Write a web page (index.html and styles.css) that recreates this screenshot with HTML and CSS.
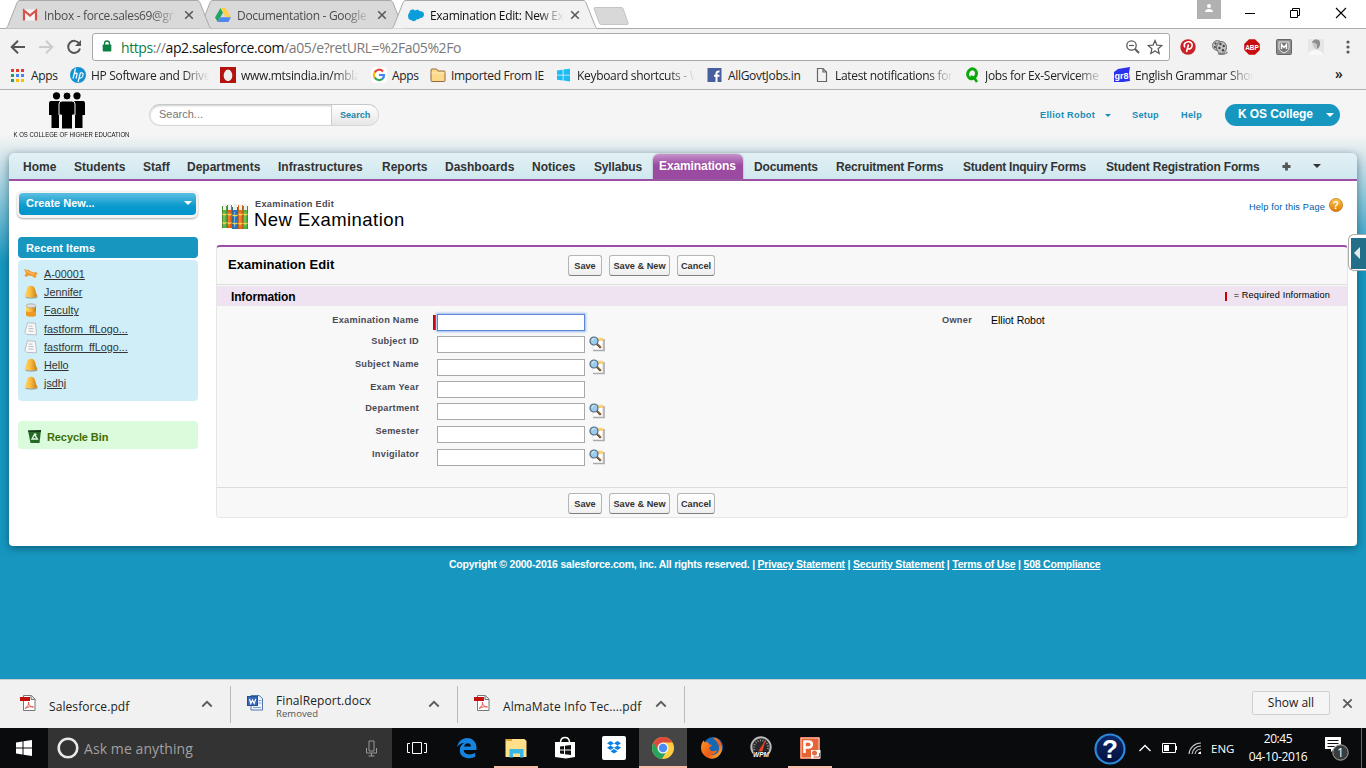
FILE: index.html
```html
<!DOCTYPE html>
<html lang="en">
<head>
<meta charset="utf-8">
<title>Examination Edit: New Examination</title>
<link rel="stylesheet" href="styles.css">
</head>
<body>
<svg class="defs" width="0" height="0" aria-hidden="true">
  <defs>
    <linearGradient id="gold" x1="0" x2="1"><stop offset="0" stop-color="#ffd46b"/><stop offset=".45" stop-color="#fbbd3e"/><stop offset="1" stop-color="#c67a12"/></linearGradient>
    <linearGradient id="ball" x1="0" y1="0" x2="0" y2="1"><stop offset="0" stop-color="#ffc14a"/><stop offset="1" stop-color="#e07c00"/></linearGradient>
    <linearGradient id="blueq" x1="0" y1="0" x2="0" y2="1"><stop offset="0" stop-color="#0c2a6b"/><stop offset="1" stop-color="#03103c"/></linearGradient>
    <linearGradient id="fox" x1="0" y1="0" x2="1" y2="1"><stop offset="0" stop-color="#ff9a1f"/><stop offset=".6" stop-color="#ee5b17"/><stop offset="1" stop-color="#ffcf3a"/></linearGradient>
  </defs>
  <symbol id="close" viewBox="0 0 10 10"><path d="M1.2 1.2l7.600 7.600M8.800 1.200L1.200 8.800" stroke="#5a5a5a" stroke-width="1.600"/></symbol>
  <symbol id="caret-up" viewBox="0 0 12 8"><path d="M1.300 6.500L6 1.800l4.700 4.700" fill="none" stroke="#5a5a5a" stroke-width="1.800"/></symbol>
  <symbol id="pdf" viewBox="0 0 16 16"><path d="M3.500.5h8l3.500 3.500v11.500H3.500z" fill="#fff" stroke="#777"/><path d="M11 .5V4.500h4" fill="#ddd" stroke="#777"/><rect y="2" width="10" height="4" fill="#c4100c"/><path d="M5 13.500c3-2 4-4.500 3.500-6.500-.5 3 2.500 5 5 5-3-.9-5.500 0-8.500 1.500z" fill="none" stroke="#e5554d"/></symbol>
  <symbol id="bell" viewBox="0 0 14 14"><ellipse cx="7.500" cy="12.300" rx="6.300" ry="1.500" fill="#7d8c8c" opacity=".7"/><path d="M.5 11C1.800 9.500 2.200 6 3.200 3.200c1.200-3.300 6.400-3.300 7.600 0C11.800 6 12.200 9.500 13.500 11c.5 2-13.500 2-13 0z" fill="url(#gold)"/></symbol>
  <symbol id="doc" viewBox="0 0 14 14"><path d="M3.500.8l8 .5 1 11.500-9.700-.4-2-1.800z" fill="#f8f8f8" stroke="#aab4b8" stroke-width=".8"/><path d="M4.500 4l4 .2M4.500 6.500l5 .2M4.500 9l5 .3" stroke="#b9bdc0"/></symbol>
  <symbol id="lookup" viewBox="0 0 16 16"><path d="M4 14.500h11V3" fill="none" stroke="#aaa" stroke-width="1.600"/><path d="M4 2h9.500v11.500H4z" fill="#fff" stroke="#ddd" stroke-width=".6"/><path d="M7 2h7v3H7z" fill="#fbd07a"/><path d="M7.500 7.500l4.300 4.300" stroke="#53381f" stroke-width="2.200"/><path d="M8.500 8l3.500 3.500" stroke="#e7a252" stroke-width=".8"/><circle cx="5" cy="5" r="4" fill="#9bccec" stroke="#526a7a" stroke-width="1.200"/><path d="M3 4.500C3.500 3 4.500 2.500 5.500 2.600" fill="none" stroke="#e8f6ff"/></symbol>
  <symbol id="tab-shape" viewBox="0 0 207 29" preserveAspectRatio="none"><path d="M.5 28.500C2 28 2.500 26.500 3 25.500L11.500 4C12.500 1.500 13 .5 15 .5H192c2 0 2.500 1 3.500 3.500l8.500 21.500c.5 1 1 2.500 2.500 3" stroke="#a9a9a9"/></symbol>
</svg>

<header class="browser">
  <div class="tabstrip">
    <div class="tab tab-first">
      <svg class="tab-bg"><use href="#tab-shape"/></svg>
      <svg class="tab-icon" viewBox="0 0 16 16"><path d="M1 2.500h14v11H1z" fill="#f5f5f5"/><path d="M2 13.500V3.500l6 5 6-5v10" fill="none" stroke="#d9524a" stroke-width="2.200"/></svg>
      <span class="tab-title">Inbox - force.sales69@gr</span>
      <svg class="tab-close"><use href="#close"/></svg>
    </div>
    <div class="tab">
      <svg class="tab-bg"><use href="#tab-shape"/></svg>
      <svg class="tab-icon" viewBox="0 0 16 16"><path d="M5.500 1L0 10.500 2.700 15 8 5.500z" fill="#21a464"/><path d="M5.500 1h5L16 10.300h-5.200z" fill="#ffcf48"/><path d="M5.500 10.300H16L13.300 15H2.700z" fill="#4f87ee"/></svg>
      <span class="tab-title">Documentation - Google</span>
      <svg class="tab-close"><use href="#close"/></svg>
    </div>
    <div class="tab tab-active">
      <svg class="tab-bg"><use href="#tab-shape"/></svg>
      <svg class="tab-icon" viewBox="0 0 16 16"><path d="M3.200 13C1 13 0 11.500.2 9.600-.2 7.500.8 6.200 1.500 5.800 1.300 3.500 3 2.400 4.700 2.500 5.700 2.500 6.500 3 7 3.600c1.800-1.500 4-.9 4.800.7 2.500-.6 4.200 1 4.200 3.200 0 2.300-1.800 3.900-4 3.600-.8 1.200-2 1.600-3.200 1.200-1.400 2.200-4.600 2.500-5.600.7z" fill="#0b9dda"/></svg>
      <span class="tab-title">Examination Edit: New Ex</span>
      <svg class="tab-close"><use href="#close"/></svg>
    </div>
    <svg class="new-tab" viewBox="0 0 36 18"><path d="M1 1.500q0-1 1-1h26q1.500 0 2 1l5 14q.5 2-1 2H9q-2 0-2.500-1z" fill="#d8d8d8" stroke="#c5c5c5"/></svg>
    <div class="window-tools">
      <svg class="profile" viewBox="0 0 24 19"><rect width="24" height="19" fill="#b1b1b1"/><circle cx="12" cy="6" r="2" fill="#fff"/><path d="M8 12c0-4 8-4 8 0z" fill="#fff"/></svg>
      <svg class="winbtn" viewBox="0 0 12 12"><path d="M1 6.500h10" stroke="#000"/></svg>
      <svg class="winbtn" viewBox="0 0 12 12"><path d="M1.500 3.500h7v7h-7zM3.500 3.500v-2h7v7h-2" fill="none" stroke="#000"/></svg>
      <svg class="winbtn" viewBox="0 0 12 12"><path d="M1 1l10 10M11 1L1 11" stroke="#000" stroke-width="1.100"/></svg>
    </div>
  </div>
  <div class="toolbar">
    <svg class="nav-btn" viewBox="0 0 16 16"><path d="M15 8H2M8 1.700L1.700 8 8 14.300" fill="none" stroke="#555" stroke-width="2"/></svg>
    <svg class="nav-btn" viewBox="0 0 16 16"><path d="M1 8h13M8 1.700L14.300 8 8 14.300" fill="none" stroke="#ccc" stroke-width="2"/></svg>
    <svg class="nav-btn" viewBox="0 0 16 16"><path d="M13.200 4.500A6 6 0 1 0 14 9.500" fill="none" stroke="#555" stroke-width="2"/><path d="M15 1v6H9z" fill="#555"/></svg>
    <div class="omnibox">
      <svg class="lock" viewBox="0 0 10 12"><path d="M2.500 5V3.500a2.500 2.500 0 0 1 5 0V5" fill="none" stroke="#0b8043" stroke-width="1.300"/><rect x=".7" y="4.500" width="8.600" height="7" rx=".7" fill="#0b8043"/></svg>
      <span class="url"><span class="scheme">https</span>://<b>ap2.salesforce.com</b>/a05/e?retURL=%2Fa05%2Fo</span>
      <svg class="omni-icon" viewBox="0 0 16 16"><circle cx="6.500" cy="6.500" r="4.700" fill="none" stroke="#5a5a5a" stroke-width="1.300"/><path d="M4 6.500h5" stroke="#5a5a5a" stroke-width="1.200"/><path d="M10 10l4 4" stroke="#5a5a5a" stroke-width="2"/></svg>
      <svg class="omni-icon" viewBox="0 0 16 16"><path d="M8 1.500l1.900 4.600 4.900.4-3.700 3.200 1.100 4.800L8 12l-4.200 2.500 1.100-4.800L1.200 6.500l4.900-.4z" fill="none" stroke="#5a5a5a" stroke-width="1.200"/></svg>
    </div>
    <div class="extensions">
      <svg viewBox="0 0 16 16"><circle cx="8" cy="8" r="7.700" fill="#cb2027"/><path d="M4.800 8.300C3 4.500 6 2.800 8.400 2.800c2.800 0 4 1.900 3.700 3.900-.4 2.700-2.600 4-4.300 2.700M8.500 5.500L6.500 13" fill="none" stroke="#fff" stroke-width="1.600"/></svg>
      <svg viewBox="0 0 16 16"><path d="M6 14.500c3 1.500 8 1 9.500-1.500" fill="none" stroke="#888" stroke-width="1.500"/><circle cx="5.500" cy="6.500" r="5" fill="#bbb" stroke="#777"/><ellipse cx="9.500" cy="8.500" rx="5" ry="6" fill="#c4c4c4" stroke="#666"/><g fill="#444"><circle cx="8.500" cy="5" r="1.200"/><circle cx="11.700" cy="7" r="1.200"/><circle cx="7.500" cy="9" r="1.200"/><circle cx="11" cy="11.200" r="1.200"/><circle cx="3.500" cy="4.500" r="1"/><circle cx="3" cy="8" r="1"/></g></svg>
      <svg viewBox="0 0 16 16"><path d="M5 .2h6L15.800 5v6L11 15.800H5L.2 11V5z" fill="#c70d0d"/><text x="8" y="10.600" class="abp">ABP</text></svg>
      <svg viewBox="0 0 16 16"><rect x=".5" y=".5" width="15" height="15" rx="1" fill="#8b8b8b" stroke="#666"/><path d="M3 3h10v6c0 2-2 3.500-5 5-3-1.500-5-3-5-5z" fill="#777" stroke="#eee"/><path d="M5.500 10V5.500L8 8.500l2.500-3V10" fill="none" stroke="#fff" stroke-width="1.400"/></svg>
      <svg viewBox="0 0 16 16"><rect width="16" height="16" fill="#e6e6e6"/><path d="M4.500 4c0-5 7.500-5 7.500 0 0 3-1 6-3.500 6s-4-3-4-6z" fill="#c7c7c7"/><path d="M4 4c0-4 7-5 8-1 .5 3-1 6-3 7V6C8 4 6 3 4 4z" fill="#8d8d8d"/><path d="M0 16c1-4 4-5 7-5s7 1 9 5z" fill="#f8f8f8"/></svg>
      <svg class="kebab" viewBox="0 0 16 16"><g fill="#5a5a5a"><circle cx="8" cy="3" r="1.600"/><circle cx="8" cy="8" r="1.600"/><circle cx="8" cy="13" r="1.600"/></g></svg>
    </div>
  </div>
  <nav class="bookmarks">
    <div class="bm"><svg viewBox="0 0 16 16"><g fill="#e33b2e"><path d="M1 2h3v3H1zM6 2h3v3H6zM11 2h3v3h-3z"/></g><g><path d="M1 7h3v3H1zM1 12h3v3H1z" fill="#1fa15a"/><path d="M6 7h3v3H6zM11 7h3v3h-3z" fill="#4285f4"/><path d="M6 12h3v3H6zM11 12h3v3h-3z" fill="#fbbc05"/></g></svg><span>Apps</span></div>
    <div class="bm fade"><svg viewBox="0 0 16 16"><circle cx="8" cy="8" r="8" fill="#1292d2"/><path d="M5.500 1.500L3 11.500M4.500 7c1.500-1.500 3-1 2.500.5l-1 4M10.500 5.500L8 15M10 6.500c2-1.500 3.500-.5 3 1.500-.5 2.500-2 3.500-4 3" fill="none" stroke="#fff" stroke-width="1.200"/></svg><span>HP Software and Drive</span></div>
    <div class="bm fade"><svg viewBox="0 0 16 16"><rect width="16" height="16" fill="#b3120f"/><path d="M8 2.500c2.200 0 4.300 3 4.300 6S10.500 14 8 14s-4.300-2.500-4.300-5.500 2.100-6 4.300-6z" fill="#eee"/></svg><span>www.mtsindia.in/mbla</span></div>
    <div class="bm"><svg viewBox="0 0 16 16"><rect width="16" height="16" rx="4" fill="#fff"/><g fill="none" stroke-width="2.200"><path d="M12 4.500A5 5 0 0 0 3.700 5.500" stroke="#ea4335"/><path d="M3.700 5.300a5 5 0 0 0 0 5.400" stroke="#fbbc05"/><path d="M3.700 10.500a5 5 0 0 0 7.800 1.200" stroke="#34a853"/><path d="M11.300 12A5 5 0 0 0 13 8H8" stroke="#4285f4"/></g></svg><span>Apps</span></div>
    <div class="bm"><svg viewBox="0 0 16 16"><path d="M1 3q0-1 1-1h4.500l1.500 2H14q1 0 1 1v8.500q0 1-1 1H2q-1 0-1-1z" fill="#ffd98a" stroke="#94693d"/><path d="M1.500 6h13" stroke="#ffedbd"/></svg><span>Imported From IE</span></div>
    <div class="bm fade"><svg viewBox="0 0 16 16"><path d="M1 3.500l5.700-.8v5H1zM7.500 2.600L14 1.700v6H7.500zM1 8.500h5.700v5L1 12.700zM7.500 8.500H14v6l-6.500-.9z" fill="#1cbcf5"/></svg><span>Keyboard shortcuts - W</span></div>
    <div class="bm"><svg viewBox="0 0 16 16"><rect x=".5" y="1" width="14" height="14" fill="#475f9f"/><path d="M9.500 15V6.500C9.500 5 10.500 4.300 12.500 4.500M7 8.800h5.500" fill="none" stroke="#fff" stroke-width="2"/></svg><span>AllGovtJobs.in</span></div>
    <div class="bm fade"><svg viewBox="0 0 16 16"><path d="M3.500 1.500H9L12.500 5v9.500h-9zM9 1.500V5h3.500" fill="none" stroke="#666" stroke-width="1.200"/></svg><span>Latest notifications for</span></div>
    <div class="bm fade"><svg viewBox="0 0 16 16"><ellipse cx="8" cy="6.800" rx="4.300" ry="5" fill="none" stroke="#0aa80a" stroke-width="3" transform="rotate(20 8 7)"/><path d="M6.500 9.500l3.500 1 3 4.500" fill="none" stroke="#0aa80a" stroke-width="2.500"/></svg><span>Jobs for Ex-Serviceme</span></div>
    <div class="bm fade"><svg viewBox="0 0 16 16"><path d="M4 2l12-2-1 6 1 8-7 1H0V5z" fill="#2c31ef"/><text x="7.500" y="11.500" class="gr8">gr8</text></svg><span>English Grammar Shor</span></div>
    <div class="more">»</div>
  </nav>
</header>

<main class="page">
  <div class="masthead">
    <div class="logo">
      <svg viewBox="0 0 38 37"><circle cx="8.500" cy="3.800" r="3.600"/><circle cx="29" cy="3.800" r="3.600"/><path d="M3 9h9v9.500h-1V36H3.500V23H1V11q0-2 2-2zM26 9h9q2 0 2 2v12h-2.500v13H27V18.500h-1z"/><g stroke="#f5f5f5" stroke-width="1"><path d="M14 9h10q3 0 3 3v11h-2.500v14h-11V23H11V12q0-3 3-3z"/><circle cx="19" cy="4" r="4"/></g></svg>
      <span>K OS COLLEGE OF HIGHER EDUCATION</span>
    </div>
    <div class="search"><span class="search-field">Search...</span><span class="search-btn">Search</span></div>
    <div class="user-links">
      <a class="u-name">Elliot Robot</a><i class="tri tri-user"></i><a class="u-setup">Setup</a><a class="u-help">Help</a>
      <div class="app-menu"><span>K OS College</span><i class="tri"></i></div>
    </div>
  </div>

  <div class="card">
    <nav class="tabs">
      <a>Home</a><a>Students</a><a>Staff</a><a>Departments</a><a>Infrastructures</a><a>Reports</a><a>Dashboards</a><a>Notices</a><a class="tight">Syllabus</a><a class="current">Examinations</a><a class="tight">Documents</a><a class="tight">Recruitment Forms</a><a class="tighter">Student Inquiry Forms</a><a class="tight">Student Registration Forms</a>
      <svg class="plus" viewBox="0 0 9 9"><path d="M4.500.5v8M.5 4.500h8" stroke="#555" stroke-width="2.800"/></svg><i class="tri tri-tabs"></i>
    </nav>
    <div class="columns">
      <aside class="sidebar">
        <div class="create"><div class="create-in"><span>Create New...</span><i class="tri"></i></div></div>
        <section class="recent">
          <h2>Recent Items</h2>
          <ul>
            <li><svg viewBox="0 0 14 14"><path d="M0 2l2.500 1L4 2.500 6 4l4 1.500 2-.5 1.800 1.500L12 8l.5 2-2 1L8 9 5 8.500 2 10 .5 8.500 2 6.500z" fill="#f09a32"/><path d="M2 4l8 3.500" stroke="#ffc476"/></svg><a>A-00001</a></li>
            <li><svg><use href="#bell"/></svg><a>Jennifer</a></li>
            <li><svg viewBox="0 0 14 14"><path d="M2 3v9c0 2 10 2 10 0V3z" fill="url(#gold)"/><path d="M2 8v4c0 2 10 2 10 0V8c0 1.500-10 1.500-10 0z" fill="#ec9924"/><ellipse cx="7" cy="2.800" rx="5" ry="2" fill="#ddd" stroke="#999" stroke-width=".6"/></svg><a>Faculty</a></li>
            <li><svg><use href="#doc"/></svg><a>fastform_ffLogo...</a></li>
            <li><svg><use href="#doc"/></svg><a>fastform_ffLogo...</a></li>
            <li><svg><use href="#bell"/></svg><a>Hello</a></li>
            <li><svg><use href="#bell"/></svg><a>jsdhj</a></li>
          </ul>
        </section>
        <div class="recycle"><svg viewBox="0 0 14 15"><path d="M.5 1.500h13L12 14H3z" fill="#256b25"/><path d="M.5 1.500L1 3h12.500V1z" fill="#133d13"/><path d="M4.500 10l2.500-4.500L9.800 10zM7 5l2 .5" fill="none" stroke="#e4f5e4" stroke-width="1.400"/></svg><span>Recycle Bin</span></div>
      </aside>
      <section class="detail">
        <div class="title-row">
          <svg class="books" viewBox="0 0 26 26"><path d="M0 2h5v22H0z" fill="#55b340"/><path d="M5 1h5v23H5z" fill="#e65d12"/><path d="M10 3h6v22h-6z" fill="#2e75c0"/><path d="M16 1h5v24h-5z" fill="#ed6b17"/><path d="M21 2h5v23h-5z" fill="#55b340"/><path d="M1 0h3v6H1zM6 0h3v6H6zM11 0h4v6h-4zM17 0h3v6h-3zM22 0h3v6h-3z" fill="#eef0ee"/><path d="M.3 2v22M5.100 2v22M10.200 3v22M15.900 3v22M20.900 2v23M25.700 2v23" stroke="#4d5a28" stroke-width=".6"/><path d="M2 8v14M23 8v14" stroke="#8ed36f"/><path d="M7 8v14M18 8v14" stroke="#ff9a50"/><path d="M12.500 8v15" stroke="#6eb1ea"/><path d="M.5 10q2 1.500 4 0M5.500 10q2 1.500 4 0M10.500 11q2.500 1.500 5 0M16.500 10q2 1.500 4 0M21.500 10q2 1.500 4 0M.5 18.500q2 1.500 4 0M5.500 18.500q2 1.500 4 0M10.500 19q2.500 1.500 5 0M16.500 19q2 1.500 4 0M21.500 19q2 1.500 4 0" fill="none" stroke="#f8d44c" stroke-width="1.300"/></svg>
          <div class="titles"><div class="kind">Examination Edit</div><h1>New Examination</h1></div>
          <div class="help-link"><a>Help for this Page</a><svg viewBox="0 0 14 14"><circle cx="7" cy="7" r="6.600" fill="url(#ball)" stroke="#b87620" stroke-width=".7"/><text x="7" y="10.700" class="help-q">?</text></svg></div>
        </div>
        <form class="panel">
          <div class="panel-head"><h2>Examination Edit</h2><div class="buttons"><span class="btn b-save">Save</span><span class="btn b-new">Save &amp; New</span><span class="btn b-cancel">Cancel</span></div></div>
          <div class="section-head"><h3>Information</h3><span class="required"><i></i><span>= Required Information</span></span></div>
          <div class="fields">
            <div class="left">
              <div class="row h22"><label class="low">Examination Name</label><span class="req"></span><span class="input focus"></span></div>
              <div class="row"><label>Subject ID</label><span class="input"></span><svg><use href="#lookup"/></svg></div>
              <div class="row h22"><label>Subject Name</label><span class="input"></span><svg><use href="#lookup"/></svg></div>
              <div class="row h22"><label class="low">Exam Year</label><span class="input"></span></div>
              <div class="row"><label>Department</label><span class="input"></span><svg><use href="#lookup"/></svg></div>
              <div class="row"><label>Semester</label><span class="input"></span><svg><use href="#lookup"/></svg></div>
              <div class="row"><label>Invigilator</label><span class="input"></span><svg><use href="#lookup"/></svg></div>
            </div>
            <div class="owner"><label>Owner</label><span>Elliot Robot</span></div>
          </div>
          <div class="panel-foot"><div class="buttons"><span class="btn b-save">Save</span><span class="btn b-new">Save &amp; New</span><span class="btn b-cancel">Cancel</span></div></div>
        </form>
      </section>
    </div>
  </div>
  <footer class="copyright">Copyright © 2000-2016 salesforce.com, inc. All rights reserved. | <u>Privacy Statement</u> | <u>Security Statement</u> | <u>Terms of Use</u> | <u>508 Compliance</u></footer>
  <div class="drawer"><svg viewBox="0 0 15 31"><rect width="15" height="31" fill="#236e89"/><path d="M9 9v12l-6-6z" fill="#e5e9ea"/></svg></div>
</main>

<div class="downloads">
  <div class="dl dl-1"><svg class="dl-icon"><use href="#pdf"/></svg><span class="dl-name">Salesforce.pdf</span><svg class="caret"><use href="#caret-up"/></svg></div>
  <div class="dl dl-2"><svg class="dl-icon" viewBox="0 0 16 16"><path d="M4 .5h8l3.500 3v11.500H4z" fill="#f0f5ff" stroke="#5576ad"/><path d="M11.500 5.500h3M11.500 8h3M6 12.500h8" stroke="#7f9bd0"/><rect x=".5" y="1.500" width="10" height="9" fill="#3768b9" stroke="#244e96"/><path d="M2.500 4l1.300 4.500L5.500 5l1.700 3.500L8.700 4" fill="none" stroke="#fff" stroke-width="1.200"/></svg><span class="dl-name n2">FinalReport.docx<small>Removed</small></span><svg class="caret"><use href="#caret-up"/></svg></div>
  <div class="dl dl-3"><svg class="dl-icon"><use href="#pdf"/></svg><span class="dl-name n3">AlmaMate Info Tec....pdf</span><svg class="caret"><use href="#caret-up"/></svg></div>
  <div class="show-all">Show all</div>
  <svg class="dl-close"><use href="#close"/></svg>
</div>

<div class="taskbar">
  <div class="start"><svg viewBox="0 0 16 16"><path d="M0 2.500l6.500-1v6H0zM7.500 1.300L16 0v7.500H7.500zM0 8.500h6.500v6L0 13.500zM7.500 8.500H16V16l-8.500-1.300z" fill="#fff"/></svg></div>
  <div class="cortana">
    <svg class="ring" viewBox="0 0 22 22"><circle cx="11" cy="11" r="9.300" fill="none" stroke="#e8e8e8" stroke-width="2.600"/></svg>
    <span>Ask me anything</span>
    <svg class="mic" viewBox="0 0 12 17"><path d="M3.500 1h5v10h-5zM1 8v5h10V8M6 13v3M3 16h6" fill="none" stroke="#999"/></svg>
  </div>
  <div class="apps">
    <div class="app"><svg viewBox="0 0 24 24"><path d="M7.500 6.500h9v11h-9zM5 7.500H2.500v9H5M19 7.500h2.500v9H19" fill="none" stroke="#fff"/></svg></div>
    <div class="app"><svg viewBox="0 0 24 24"><path d="M2.200 11C3 5.500 7 2 12.200 2 18 2 21.500 6.500 21.500 12v2H8.700c.2 5 7.300 5.500 11.500 2.800v4C14 24 4.500 22 4.800 14c0-3.500 2-6 4.600-7C6 7 3.500 8.800 2.200 11zM9 10.500h7c0-4.500-6-4.500-7 0z" fill="#1584df"/></svg></div>
    <div class="app run"><svg viewBox="0 0 24 24"><path d="M1.500 3h19l2 2v16h-21z" fill="#ffe08a"/><path d="M2 3h6v2H2z" fill="#dba638"/><path d="M5.500 13h14v8.500h-3.500v-4h-7v4H5.500z" fill="#39b6e8"/></svg></div>
    <div class="app"><svg viewBox="0 0 24 24"><path d="M7.500 6C8 0 16 0 16.500 6" fill="none" stroke="#fff" stroke-width="1.500"/><path d="M2 6h20v15l-9 1.500L2 21z" fill="#fff"/><path d="M7 10.500l4-.5v3.500H7zM12 9.800l6-.8v4.500h-6zM7 14.500h4V18l-4-.5zM12 14.500h6V19l-6-.8z" fill="#111"/></svg></div>
    <div class="app"><svg viewBox="0 0 24 24"><rect width="24" height="24" rx="2" fill="#fff"/><path d="M8.500 5L5 7.300l3.500 2.200L12 7.300zM15.500 5L12 7.300l3.500 2.200L19 7.300zM8.500 9.500L5 11.800 8.500 14l3.500-2.200zM15.500 9.500L12 11.800l3.500 2.200 3.500-2.200zM12 13l-3.500 2.200L12 17.500l3.500-2.300z" fill="#0b7fe8"/></svg></div>
    <div class="app run on"><svg viewBox="0 0 24 24"><circle cx="12" cy="12" r="11" fill="#ffcd42"/><path d="M2.500 6.500A11 11 0 0 0 11 23l5-8.500z" fill="#27a55f"/><path d="M12 6.500h9.500a11 11 0 0 0-19 0L7 14z" fill="#dc4a3c"/><circle cx="12" cy="12" r="5.500" fill="#f5f5f5"/><circle cx="12" cy="12" r="4.200" fill="#4b8bf4"/></svg></div>
    <div class="app"><svg viewBox="0 0 24 24"><circle cx="13" cy="11" r="10" fill="#1767b5"/><path d="M13 2c4-1 9 3 9 10 0 6-4.500 10.700-10 10.700S1 18 1 12C1 9 2 6 3.500 4.500L5 6.500 8 6c0 2 2 3 4 3-1 2-3 2-3 3 1 4 5 4 8 2-1 5-7 5-9 3 5 4 12 1 11-6-.5-4-3-7-6-9z" fill="url(#fox)"/></svg></div>
    <div class="app"><svg viewBox="0 0 24 24"><circle cx="12" cy="11" r="9.700" fill="#292929" stroke="#bbb" stroke-width="2"/><path d="M5.500 14a7 7 0 1 1 13 0" fill="none" stroke="#8c8c8c" stroke-width="2" stroke-dasharray="1 1.500"/><path d="M17 3L9 16l3.500 2z" fill="#ef4525"/><rect x="4" y="15.500" width="16" height="6.500" fill="#111"/><text x="12" y="21.300" class="wpm">WPM</text></svg></div>
    <div class="app run"><svg viewBox="0 0 24 24"><path d="M2 1h20v22H2z" fill="#d24625"/><path d="M3 2h18v20H3z" fill="#e86436" stroke="#f9d6c8"/><path d="M6.500 17V5.500h4c4.500 0 4.500 6 0 6h-4" fill="none" stroke="#fff" stroke-width="2.600"/><path d="M13 14h9.500v8.500H13z" fill="#fff"/><circle cx="16.500" cy="17" r="2.500" fill="#e46a45"/><path d="M15.500 21h6v-4" fill="none" stroke="#d24625"/></svg></div>
  </div>
  <div class="tray">
    <svg class="bigq" viewBox="0 0 32 32"><circle cx="16" cy="16" r="14.500" fill="url(#blueq)" stroke="#2c88d8" stroke-width="2.200"/><text x="16" y="25" class="bigq-t">?</text></svg>
    <svg class="tcaret" viewBox="0 0 14 10"><path d="M1.500 8L7 2.500 12.500 8" fill="none" stroke="#fff" stroke-width="1.300"/></svg>
    <svg class="batt" viewBox="0 0 16 10"><path d="M.5.5h13v9H.5zM14.500 3v4" fill="none" stroke="#fff"/><path d="M2 2h5v6H2z" fill="#fff"/></svg>
    <svg class="wifi" viewBox="0 0 14 14"><g fill="none" stroke="#ccc" stroke-width="1.100"><path d="M1 13A12 12 0 0 1 13 2"/><path d="M4 13a9 9 0 0 1 9-8"/><path d="M7 13a6 6 0 0 1 6-5"/></g><path d="M10 13a3 3 0 0 1 3-2.500V13z" fill="#fff"/></svg>
    <span class="lang">ENG</span>
    <div class="clock"><span>20:45</span><span>04-10-2016</span></div>
    <svg class="notif" viewBox="0 0 26 26"><path d="M1 1h16v12h-7l-3 3v-3H1z" fill="#fff"/><path d="M3.500 4.500h11M3.500 7.500h11M3.500 10.500h7" stroke="#111"/><circle cx="16.500" cy="16.500" r="7.700" fill="#3c3c3c" stroke="#aaa"/><text x="16.500" y="21" class="badge">1</text></svg>
    <i class="peek"></i>
  </div>
</div>
</body>
</html>
```
FILE: styles.css
```css
* { box-sizing: border-box; }
body { margin: 0; width: 1366px; height: 768px; overflow: hidden; display: flex; flex-direction: column; font-family: "Liberation Sans", Arial, sans-serif; white-space: nowrap; }
h1, h2, h3, ul { margin: 0; padding: 0; list-style: none; }
svg { display: block; flex: none; }
.defs { position: absolute; }

/* browser frame */
.browser { height: 90px; background: #f2f2f2; border-bottom: 1px solid #b2b2b2; font-family: "Open Sans", sans-serif; font-size: 12px; color: #222; }
.tabstrip { height: 29px; display: flex; background: #fff; border-bottom: 1px solid #aaa; padding-left: 5px; }
.tab { position: relative; isolation: isolate; width: 207px; height: 29px; margin-right: -14px; padding: 1px 0 0 17px; display: flex; align-items: center; flex: none; }
.tab-first { z-index: 1; }
.tab-active { z-index: 2; }
.tab-bg { position: absolute; left: 0; top: 0; width: 207px; height: 29px; fill: #d9d9d9; z-index: -1; }
.tab-active .tab-bg { fill: #f2f2f2; }
.tab-icon { width: 16px; height: 16px; margin-right: 6px; }
.tab-title { width: 134px; -webkit-mask-image: linear-gradient(90deg, #000 108px, transparent 134px); mask-image: linear-gradient(90deg, #000 108px, transparent 134px); color: #4c4c4c; letter-spacing: -.33px; }
.tab-active .tab-title { color: #111; }
.tab-close { width: 10px; height: 10px; margin-left: 6px; }
.new-tab { width: 36px; height: 18px; margin: 7px 0 0 9px; }
.window-tools { display: flex; margin-left: auto; align-items: flex-start; padding-right: 19px; }
.profile { width: 24px; height: 19px; margin-right: 24px; }
.winbtn { width: 12px; height: 12px; margin: 7px 0 0 33px; }
.profile + .winbtn { margin-left: -1px; margin-right: 1px; }
.winbtn:nth-child(3) { margin-left: 32px; margin-right: 1px; }
.toolbar { height: 33px; padding: 3px 0 0 10px; display: flex; align-items: center; }
.nav-btn { width: 16px; height: 16px; margin-right: 12px; }
.nav-btn:nth-child(3) { margin-right: 10px; }
.omnibox { width: 1078px; height: 28px; border: 1px solid #a9a9a9; border-radius: 3px; background: #fff; display: flex; align-items: center; padding: 0 6px 0 9px; }
.lock { width: 10px; height: 12px; margin-top: -2px; }
.url { font-size: 14px; color: #7a7a7a; margin-left: 9px; flex: 1; letter-spacing: -.4px; }
.url b { font-weight: 400; color: #111; }
.scheme { color: #0b8043; }
.omni-icon { width: 16px; height: 16px; margin-left: 6px; }
.extensions { display: flex; gap: 16px; margin-left: 10px; }
.extensions svg { width: 16px; height: 16px; }
.abp { font: bold 6.500px "Liberation Sans", sans-serif; fill: #fff; text-anchor: middle; }
.bookmarks { height: 27px; display: grid; grid-template-columns: 60px 150px 151px 59px 126px 151px 107px 150px 150px 221px 20px; padding: 0 0 1px 10px; align-items: center; }
.bm { display: flex; align-items: center; gap: 5px; }
.bm svg { width: 16px; height: 16px; }
.bm span { letter-spacing: -.32px; }
.fade span { width: 122px; margin-right: -10px; -webkit-mask-image: linear-gradient(90deg, #000 92px, transparent 118px); mask-image: linear-gradient(90deg, #000 92px, transparent 118px); }
.gr8 { font: bold 9px "Liberation Sans", sans-serif; fill: #fff; text-anchor: middle; }
.more { font-size: 14px; font-weight: 600; line-height: 20px; margin-top: -2px; }

/* page */
.page { position: relative; height: 589px; background: linear-gradient(#f5f5f5 0, #f5f5f5 44px, #d0e4eb 70px, #1797c0 172px); padding: 0 9px; }
.masthead { height: 63px; display: flex; align-items: flex-start; }
.logo { width: 114px; margin: 2px 26px 0 5px; display: flex; flex-direction: column; align-items: center; }
.logo svg { width: 38px; height: 37px; margin-right: 8px; }
.logo span { font-size: 7.500px; line-height: 8px; margin-top: 2px; transform: scale(.8, 1.080); color: #111; }
.search { margin-top: 14px; width: 230px; height: 22px; display: flex; border: 1px solid #d6d6d6; border-top-color: #c8c8c8; border-radius: 11px; overflow: hidden; background: #fff; box-shadow: inset 0 1px 2px #ccc; margin-left: -5px; }
.search-field { width: 181px; padding-left: 9px; font-size: 11px; line-height: 19px; color: #777; }
.search-btn { flex: 1; border-left: 1px solid #ccc; background: linear-gradient(#fff, #e6e6e6); color: #1a87ad; font-size: 9.100px; font-weight: bold; line-height: 20px; padding-left: 8px; }
.user-links { margin: 14px 17px 0 auto; height: 22px; display: flex; align-items: center; font-size: 9.200px; font-weight: bold; color: #1a8cb8; }
.user-links a { letter-spacing: .3px; }
.tri { display: block; flex: none; width: 0; height: 0; border: 4px solid transparent; border-top-color: currentColor; border-bottom: 0; }
.u-name { width: 65px; }
.tri-user { border-width: 3px 3px 0; margin-right: 21px; }
.u-setup { width: 49px; }
.u-help { width: 44px; }
.app-menu { width: 115px; height: 22px; border-radius: 11px; background: #1797c0; color: #fff; font-size: 12px; line-height: 20px; display: flex; align-items: center; justify-content: space-between; padding: 0 6px 0 13px; }
.app-menu span { margin-top: -2px; letter-spacing: -.1px; }
.card { height: 393px; background: #fff; border-radius: 6px 6px 4px 4px; box-shadow: 0 2px 9px rgba(0, 35, 50, .5); }
.tabs { height: 28px; display: grid; grid-template-columns: 51px 69px 44px 91px 104px 63px 87px 62px 59px 101px 82px 127px 143px 176px 31px 10px; align-items: center; padding-left: 14px; background: linear-gradient(#e3f1f5, #cfe8ef); border-bottom: 2px solid #9b4fa5; border-radius: 6px 6px 0 0; font-size: 12px; font-weight: bold; color: #333; }
.tabs a:not(.current) { padding-top: 1px; }
.tabs .tight { letter-spacing: -.17px; }
.tabs .tighter { letter-spacing: -.24px; }
.tabs .current { height: 25px; width: 90px; margin-top: 1px; padding-left: 6px; line-height: 25px; letter-spacing: -.1px; border-radius: 6px 6px 0 0; color: #fff; background: linear-gradient(#c793cd, #9b4aa2 45%); box-shadow: 0 0 2px #888; }
.plus { width: 9px; height: 9px; }
.columns { display: flex; height: 365px; }
.sidebar { width: 207px; padding: 10px 0 0 8px; }
.create { width: 181px; height: 27px; padding: 2px; border-radius: 6px; background: #f3f3f3; box-shadow: 0 1px 2px #aaa; }
.create-in { height: 22px; border-radius: 4px; background: linear-gradient(#5cbfe1, #0a99cd 60%, #0093c9); color: #fff; font-size: 11px; font-weight: bold; display: flex; align-items: center; justify-content: space-between; padding: 0 4px 2px 7px; }
.recent { width: 180px; margin: 19px 0 0 1px; }
.recent h2 { height: 21px; border-radius: 4px; background: #1797c0; color: #fff; font-size: 11px; line-height: 22px; padding-left: 8px; letter-spacing: .05px; }
.recent ul { height: 141px; margin-top: 2px; padding: 5px 0 0 6px; border-radius: 4px; background: #cfeef8; font-size: 10.800px; }
.recent li { height: 18.200px; display: flex; align-items: center; gap: 6px; color: #333; }
.recent li svg { width: 14px; height: 14px; }
.recent a { text-decoration: underline; }
.recycle { width: 180px; height: 28px; margin: 20px 0 0 1px; padding: 3px 0 0 9px; border-radius: 4px; background: #dafbdc; display: flex; align-items: center; gap: 5px; font-size: 11px; font-weight: bold; color: #3f6e00; letter-spacing: -.1px; }
.recycle svg { width: 15px; height: 15px; }
.detail { width: 1132px; padding-top: 16px; }
.title-row { height: 48px; display: flex; padding-left: 6px; }
.books { width: 26px; height: 26px; margin-top: 7px; }
.titles { margin-left: 6px; }
.kind { font-size: 9.200px; font-weight: bold; line-height: 14px; color: #4a4a56; margin-left: 1px; letter-spacing: .28px; }
h1 { font-size: 18.500px; font-weight: 400; line-height: 18px; color: #000; letter-spacing: .45px; }
.help-link { margin-left: auto; padding-right: 5px; display: flex; gap: 4px; height: 14px; font-size: 9.200px; color: #015ba7; line-height: 19px; margin-top: 1px; letter-spacing: .17px; }
.help-link svg { width: 14px; height: 14px; }
.help-q { font: bold 10px "Liberation Sans", sans-serif; fill: #fff; text-anchor: middle; }
.panel { height: 273px; border: 1px solid #e6e6e6; border-top: 2px solid #9b4fa5; border-radius: 4px; background: #f8f8f8; color: #000; }
.panel-head { height: 38px; border-bottom: 1px solid #dcdcdc; display: flex; padding-left: 11px; margin-bottom: 1px; }
.panel-head h2 { width: 340px; font-size: 13px; line-height: 36px; letter-spacing: .05px; }
.buttons { display: flex; gap: 7px; padding-top: 8px; }
.btn { height: 21px; border: 1px solid #b5b5b5; border-bottom-color: #7f7f7f; border-radius: 3px; background: linear-gradient(#fff, #efefef); font-size: 9.200px; font-weight: bold; line-height: 20px; text-align: center; color: #333; }
.b-save { width: 34px; }
.b-new { width: 61px; }
.b-cancel { width: 38px; }
.section-head { height: 20px; background: #efe3f1; display: flex; align-items: center; justify-content: space-between; padding: 0 17px 0 14px; }
h3 { font-size: 12px; letter-spacing: -.15px; margin-top: 2px; }
.required { display: flex; align-items: center; gap: 7px; font-size: 9.200px; margin-top: -2px; letter-spacing: .12px; }
.required i { width: 2px; height: 9px; background: #c00; margin-top: 2px; }
.fields { height: 181px; padding-top: 8px; display: flex; }
.left { width: 725px; }
.row { height: 23px; display: flex; }
.h22 { height: 22px; }
.row label, .owner label { font-size: 9.200px; font-weight: bold; color: #4a4a56; text-align: right; line-height: 12px; letter-spacing: .28px; }
.row label { width: 202px; margin-right: 18px; margin-top: -1px; }
.row .low { margin-top: 0; }
.req { width: 3px; height: 15px; margin: 1px 1px 0 -4px; background: #c00; }
.input { width: 148px; height: 17px; border: 1px solid #a9a9a9; background: #fff; }
.focus { border-color: #5c87d6; box-shadow: 0 0 2px 1px #9bbcf0; }
.row svg { width: 16px; height: 16px; margin: 0 0 0 4px; }
.owner { display: flex; font-size: 10.500px; line-height: 12px; }
.owner label { margin-right: 19px; }
.panel-foot { border-top: 1px solid #dcdcdc; padding: 0 0 0 351px; }
.panel-foot .buttons { padding-top: 5px; }
.copyright { margin-top: 12px; padding-left: 440px; color: #fff; font-size: 10.500px; font-weight: bold; line-height: 13px; letter-spacing: -.22px; }
.drawer { position: absolute; right: 0; top: 144px; width: 18px; height: 37px; padding: 3px 0 3px 2px; border: 1px solid #aaa; border-right: 0; border-radius: 6px 0 0 6px; background: #fff; }
.drawer svg { width: 15px; height: 31px; }

/* downloads shelf */
.downloads { height: 49px; background: #f1f1f1; border-top: 1px solid #ccc; display: flex; align-items: center; font-family: "Open Sans", sans-serif; font-size: 12px; color: #222; }
.dl { width: 227px; height: 37px; border-right: 1px solid #bbb; display: flex; align-items: center; padding: 0 17px 0 16px; }
.dl-1 { width: 231px; padding-left: 20px; }
.dl-icon { width: 16px; height: 16px; margin: -3px 13px 0 0; }
.dl-name { flex: 1; padding-top: 4px; letter-spacing: .08px; }
.dl-name small { display: block; font-size: 9.500px; color: #555; line-height: 10px; }
.n2 { line-height: 16px; padding-top: 3px; }
.n3 { letter-spacing: .12px; }
.caret { width: 12px; height: 8px; }
.show-all { width: 78px; height: 24px; margin: -2px 12px 0 auto; border: 1px solid #d0d0d0; border-radius: 2px; background: #f5f5f5; text-align: center; line-height: 22px; }
.dl-close { width: 11px; height: 11px; margin: -2px 13px 0 0; }

/* taskbar */
.taskbar { height: 40px; background: #0a0b0c; display: flex; color: #fff; font-family: "Open Sans", sans-serif; }
.start { width: 48px; display: flex; align-items: center; justify-content: center; }
.start svg { width: 16px; height: 16px; }
.cortana { width: 344px; background: #333; display: flex; align-items: center; padding: 0 14px 0 9px; font-size: 14px; color: #a0a0a0; letter-spacing: .08px; }
.ring { width: 22px; height: 22px; margin-right: 5px; }
.mic { width: 13px; height: 17px; margin-left: auto; }
.apps { display: flex; gap: 1px; margin-left: 2px; }
.app { width: 48px; display: flex; align-items: center; justify-content: center; border-bottom: 2px solid transparent; }
.app:first-child svg { margin-left: -3px; }
.app svg { width: 24px; height: 24px; margin-top: 1px; }
.run { border-image: linear-gradient(90deg, transparent 4px, #f8bda8 4px, #f8bda8 44px, transparent 44px) 2; }
.on { background: #454545; border-image: none; border-bottom-color: #f8bda8; }
.wpm { font: italic bold 6.500px "Liberation Sans", sans-serif; fill: #fff; text-anchor: middle; }
.tray { margin-left: auto; display: flex; align-items: center; padding-right: 4px; font-size: 12px; }
.bigq { width: 32px; height: 32px; margin-right: 12px; margin-top: 2px; }
.bigq-t { font: bold 26px "Liberation Sans", sans-serif; fill: #fff; text-anchor: middle; }
.tcaret { width: 14px; height: 10px; margin-right: 10px; }
.batt { width: 16px; height: 10px; margin-right: 10px; }
.wifi { width: 14px; height: 14px; margin-right: 9px; }
.lang { width: 24px; font-size: 11.500px; margin-right: 12px; }
.clock { width: 62px; display: flex; flex-direction: column; align-items: center; line-height: 18px; letter-spacing: -.4px; margin-right: 15px; }
.notif { width: 26px; height: 26px; margin: 2px 11px 0 0; }
.badge { font: 12px "Open Sans", sans-serif; fill: #fff; text-anchor: middle; }
.peek { width: 1px; height: 40px; background: #666; }
```
